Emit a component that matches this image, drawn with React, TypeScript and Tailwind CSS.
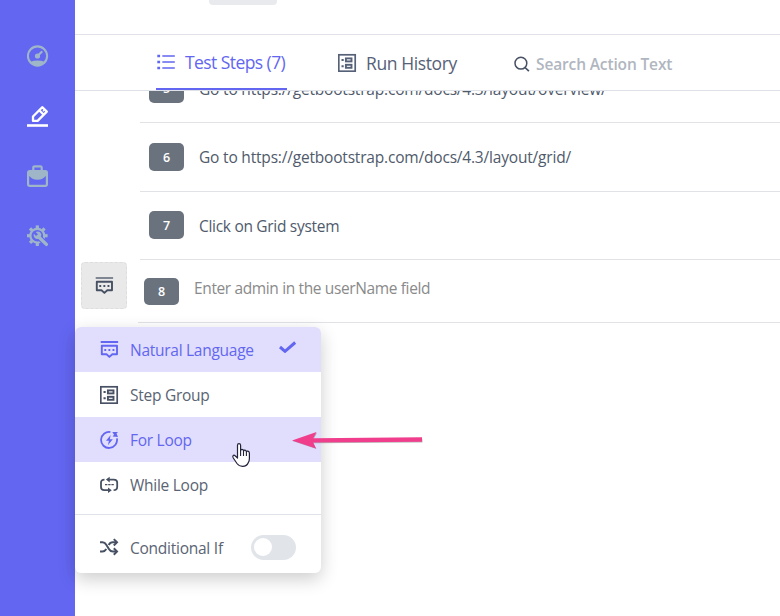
import type { ReactNode } from "react";

function Svg({ w, h, className = "", children }: { w: number; h: number; className?: string; children: ReactNode }) {
  return (
    <svg width={w} height={h} viewBox={`0 0 ${w} ${h}`} fill="none" stroke="currentColor" className={`shrink-0 ${className}`}>
      {children}
    </svg>
  );
}

const GaugeIcon = () => (
  <Svg w={22} h={22}>
    <circle cx="10.5" cy="11" r="9.6" strokeWidth="2.1" />
    <path d="M3.500 16.800Q10.500 14 17.500 16.800Q14.500 20.800 10.500 20.800Q6.500 20.800 3.500 16.800z" fill="currentColor" stroke="none" />
    <circle cx="10.5" cy="11" r="2.6" fill="currentColor" stroke="none" />
    <path d="M11 10.500L14.600 7" strokeWidth="2.200" strokeLinecap="round" />
  </Svg>
);

const PencilIcon = () => (
  <Svg w={22} h={22}>
    <path d="M6 15.900v-4.400L15.200 2.200l4.600 4.400-9.200 9.300z" strokeWidth="2.300" strokeLinejoin="round" />
    <path d="M12.200 5.200l4.400 4.400" strokeWidth="2.200" />
    <path d="M16 5.400l.9.9" strokeWidth="1.600" />
    <path d="M0 20.500h21" strokeWidth="2.600" />
  </Svg>
);

const BriefcaseIcon = () => (
  <Svg w={22} h={22}>
    <path d="M6.300 5.500V2.600q0-1.300 1.400-1.300h5.600q1.400 0 1.400 1.300v2.900" strokeWidth="2.200" />
    <rect x="1.100" y="6.200" width="18.800" height="14.600" rx="1.600" strokeWidth="2.200" />
    <path d="M1 6h19v5.200h-1.600q-2 3-7.900 3.600-5.900-.6-7.900-3.600H1z" fill="currentColor" stroke="none" />
  </Svg>
);

const GearIcon = () => (
  <Svg w={22} h={22}>
    <circle cx="10.300" cy="10.700" r="6.900" strokeWidth="2.200" />
    {[0, 45, 90, 135, 180, 225, 270, 315].map((a) => (
      <path key={a} d="M10.300 .4v3" strokeWidth="3.200" transform={`rotate(${a} 10.300 10.700)`} />
    ))}
    <path d="M13.500 13.700l6.500 6.500" stroke="#6366f1" strokeWidth="5.600" />
    <path d="M11 11.200l8.400 8.200" strokeWidth="3.400" strokeLinecap="round" />
    <path d="M8.600 6.900l2.400 2.300-.4 1.400-1.500.4-2.300-2.300q-.9 2.700 1 4.400 1.500 1.300 3.400.8l2.900-2.900q.8-2.100-.8-3.600-1.900-1.700-4.700-.5z" fill="currentColor" stroke="none" />
  </Svg>
);

const ChatIcon = ({ bar = 2 }: { bar?: number }) => (
  <Svg w={19} h={19}>
    <path d="M.7 2h17.400" strokeWidth={bar} />
    <path d="M1.800 5.700h15.200v8.600h-4.700l-2.900 2.600-2.900-2.600H1.800z" strokeWidth="1.900" strokeLinejoin="round" />
    <path d="M4.300 10h1.900M8.400 10h1.900M12.500 10h1.900" strokeWidth="1.900" />
  </Svg>
);

const StepGroupIcon = () => (
  <Svg w={19} h={19}>
    <rect x=".8" y="1.800" width="16.400" height="16.400" strokeWidth="1.700" />
    <path d="M3.500 7h2.200M3.500 13.200h2.200" strokeWidth="2" />
    <rect x="7.900" y="5.400" width="5.600" height="3" strokeWidth="1.900" />
    <rect x="7.900" y="11.800" width="5.600" height="3" strokeWidth="1.900" />
  </Svg>
);

const ForLoopIcon = () => (
  <Svg w={19} h={19}>
    <path d="M10.400 2.100A8 8 0 1 0 16.900 8.400" strokeWidth="1.800" />
    <path d="M12.300 2h5.700l-1.500 1.600 1.500 3.400-5.400-.6 1.400-1.700z" fill="currentColor" stroke="none" />
    <path d="M10.700 4.900l-4.700 5.900h2.900l-1 4.500 4.900-6h-3z" fill="currentColor" stroke="none" />
  </Svg>
);

const WhileLoopIcon = () => (
  <Svg w={19} h={19}>
    <path d="M4.500 4.600Q1 4.600 1 7.600v4.400Q1 15.200 4.300 15.200H8" strokeWidth="1.800" />
    <path d="M8.500 4.600h5.300Q17.200 4.600 17.200 7.600v4.400Q17.200 15.200 13.600 15.200" strokeWidth="1.800" />
    <path d="M9.700 1.800v5.600L5.900 4.600zM8 12.400v5.600l3.800-2.800z" fill="currentColor" stroke="none" />
    <path d="M5 9.600h2.400M8.200 9.600h2.400M11.400 9.600h2.400" strokeWidth="1.300" />
  </Svg>
);

const ShuffleIcon = () => (
  <Svg w={19} h={19}>
    <path d="M0 4.300h2.500q2.300 0 3.800 2.500l2.600 4.100q1.500 2.600 4 2.600h3.800" strokeWidth="2" />
    <path d="M0 13.500h2.500q2.300 0 3.800-2.500M8.700 6.900Q10.200 4.300 12.700 4.300h4" strokeWidth="2" />
    <path d="M13.800 1.100L17 4.300l-3.200 3.200M13.800 10.300l3.200 3.200-3.200 3.200" strokeWidth="2" />
  </Svg>
);

const ListIcon = () => (
  <Svg w={19} h={16} className="mt-[1px]">
    <path d="M6.300 2h12.500M6.300 8h12.500M6.300 14h12.500" strokeWidth="1.500" />
    <path d="M1.300 2h2.800M1.300 8h2.800M1.300 14h2.800" strokeWidth="2.600" />
  </Svg>
);

const SearchIcon = () => (
  <Svg w={16} h={16}>
    <circle cx="6.900" cy="7.200" r="5.900" strokeWidth="1.500" />
    <path d="M11 11.500l3.900 3.700" strokeWidth="1.700" />
  </Svg>
);

function Step({ n, text, tight = false }: { n: number; text: string; tight?: boolean }) {
  return (
    <div className="ml-[65px] flex h-[68.4px] shrink-0 items-center border-b border-[#e0e2e5] pl-[9px]">
      <span className="flex h-[28px] w-[35px] items-center justify-center rounded-[5px] bg-[#6a727e] pt-[2px] text-[12.500px] font-semibold text-white">{n}</span>
      <span className={`ml-[15px] mt-[2px] whitespace-nowrap text-[15.500px] text-[#4f5a6b] ${tight ? "tracking-[-0.3px]" : "tracking-[-0.19px]"}`}>{text}</span>
    </div>
  );
}

function MenuItem({ icon, label, active = false, checked = false }: { icon: ReactNode; label: string; active?: boolean; checked?: boolean }) {
  return (
    <div className={`flex h-[45px] items-center pl-[25px] ${active ? "bg-[#e0defc] text-[#6366f1]" : "text-[#475163]"}`}>
      {icon}
      <span className={`ml-[11px] mt-[2px] w-[149px] whitespace-nowrap text-[15.500px] tracking-[-0.27px] ${active ? "" : "text-[#5a6473]"}`}>{label}</span>
      {checked && (
        <Svg w={18} h={12} className="mb-[6px]">
          <path d="M1 6l5 4.300L16.200 1.500" strokeWidth="3" />
        </Svg>
      )}
    </div>
  );
}

export default function App() {
  return (
    <div className="relative flex h-[616px] w-[780px] overflow-hidden bg-white font-['Open_Sans',sans-serif]">
      <aside className="flex w-[75px] shrink-0 flex-col gap-[38px] bg-[#6366f1] pl-[27px] pt-[45px] text-[#9fb5c8]">
        <GaugeIcon />
        <span className="text-white"><PencilIcon /></span>
        <BriefcaseIcon />
        <GearIcon />
      </aside>

      <main className="flex min-w-0 flex-1 flex-col">
        <header className="h-[35px] border-b border-[#e1e1ea] pl-[134px]">
          <div className="h-[5px] w-[68px] rounded-b-[4px] bg-[#e9eaee]" />
        </header>

        <nav className="flex h-[56px] shrink-0 border-b border-[#dfe1e8]">
          <div className="ml-[81px] flex h-[55px] w-[131px] items-center border-b-2 border-[#6366f1] text-[#6366f1]">
            <ListIcon />
            <span className="ml-[10px] mt-[2px] whitespace-nowrap text-[17.500px] font-medium tracking-[-0.570px]">Test Steps (7)</span>
          </div>
          <div className="ml-[51px] flex h-[55px] w-[176px] items-center text-[#566178]">
            <StepGroupIcon />
            <span className="ml-[9px] mt-[1px] whitespace-nowrap text-[17.500px] font-medium tracking-[-0.400px]">Run History</span>
          </div>
          <div className="flex h-[58px] items-center text-[#475163]">
            <SearchIcon />
            <span className="ml-[6px] mt-[2px] whitespace-nowrap text-[15.500px] font-semibold tracking-[-0.140px] text-[#b0b6bf]">Search Action Text</span>
          </div>
        </nav>

        <section className="flex h-[169px] shrink-0 flex-col justify-end overflow-hidden">
          <Step n={5} text="Go to https://getbootstrap.com/docs/4.3/layout/overview/" />
          <Step n={6} text="Go to https://getbootstrap.com/docs/4.3/layout/grid/" />
          <Step n={7} text="Click on Grid system" tight />
        </section>

        <div className="flex h-[63px] shrink-0">
          <button className="ml-[6px] mt-[2px] flex h-[47px] w-[46px] items-center justify-center rounded-[4px] border border-dashed border-[#dedede] bg-[#e9e9e9] text-[#475163]">
            <ChatIcon bar={1.3} />
          </button>
          <div className="ml-[11px] flex flex-1 items-center border-b border-[#e0e2e5] pl-[6px]">
            <span className="flex h-[27px] w-[35px] items-center justify-center rounded-[5px] bg-[#6a727e] pt-[2px] text-[12.500px] font-semibold text-white">8</span>
            <span className="mb-[4px] ml-[15px] whitespace-nowrap text-[15.500px] tracking-[-0.370px] text-[#8a8a8a]">Enter admin in the userName field</span>
          </div>
        </div>
      </main>

      <div className="absolute left-[75px] top-[327px] w-[246px] rounded-[6px] bg-white shadow-[0_6px_18px_rgba(0,0,0,0.2)]">
        <div className="overflow-hidden rounded-[6px]">
          <MenuItem icon={<ChatIcon />} label="Natural Language" active checked />
          <MenuItem icon={<StepGroupIcon />} label="Step Group" />
          <MenuItem icon={<ForLoopIcon />} label="For Loop" active />
          <MenuItem icon={<WhileLoopIcon />} label="While Loop" />
          <div className="mt-[7px] flex h-[59px] items-center border-t border-[#dfe2e8] pl-[25px] pt-[7px] text-[#475163]">
            <ShuffleIcon />
            <span className="ml-[11px] mt-[2px] w-[121px] whitespace-nowrap text-[15.500px] tracking-[-0.250px] text-[#5a6473]">Conditional If</span>
            <span className="mb-px flex h-[25px] w-[45px] items-center rounded-full bg-[#e1e5ea] pl-[3px]">
              <span className="h-[18px] w-[18px] rounded-full bg-white" />
            </span>
          </div>
        </div>
      </div>

      <svg className="absolute left-[290px] top-[428px]" width="136" height="24" viewBox="0 0 136 24">
        <path d="M2.500 13L27 5l-3.500 6.200h109v3.200l-109 .8L26.500 21z" fill="#777" opacity=".5" />
        <path d="M2 12.500L26.500 4l-3.300 6.200L132 9.300v4.400l-108.800.8L26 20.500z" fill="#f03e8d" />
      </svg>

      <svg className="absolute left-[231px] top-[442px]" width="22" height="28" viewBox="0 0 22 28">
        <path
          d="M6.500 16V3.200Q6.500 1.600 8 1.600T9.600 3.200V8.500Q9.700 7.400 11 7.400T12.600 9Q12.900 8 14 8.200T15.400 9.800Q15.600 9 16.900 9.200T18.400 11V16.500Q18.400 19 17.200 20.800Q16 24.300 11.500 24.300Q8 24.300 6 21.500L2.300 16Q1.300 14.300 2.200 13.500T4.400 14Z"
          fill="#fff"
          stroke="#22223a"
          strokeWidth="1.200"
          strokeLinejoin="round"
        />
        <path d="M9.600 8v6M12.500 9v5M15.400 10v4" stroke="#22223a" strokeWidth="1.100" />
      </svg>
    </div>
  );
}
